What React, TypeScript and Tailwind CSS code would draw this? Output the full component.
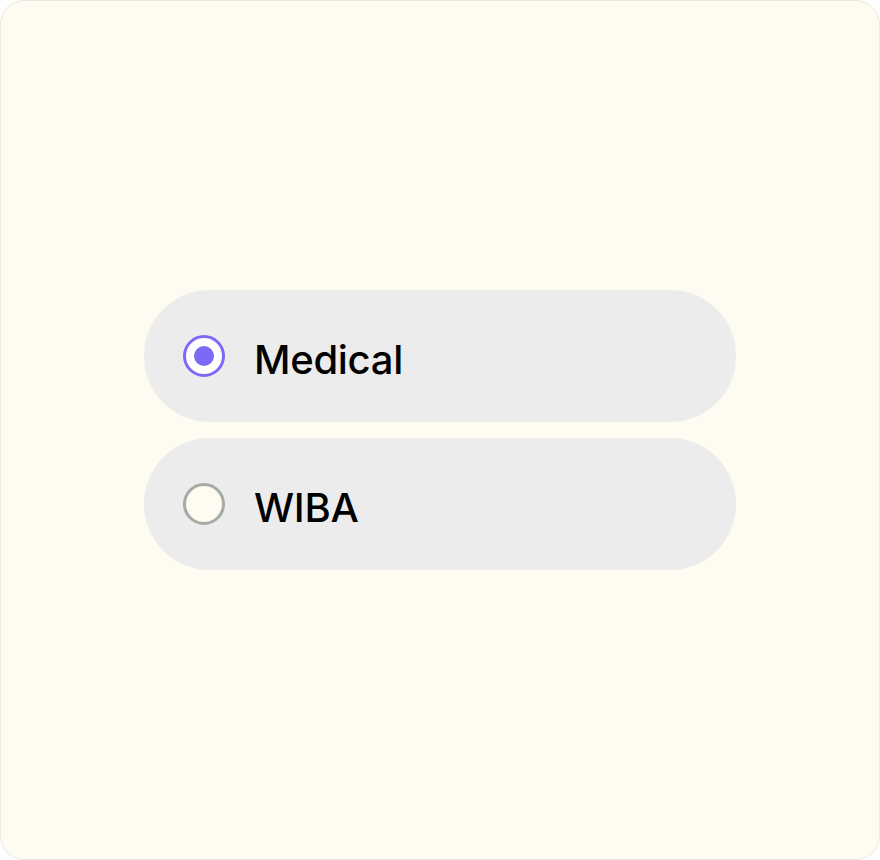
import { useState } from 'react';

const options = ["Medical", "WIBA"];

export default function App() {
  const [selected, setSelected] = useState("Medical");

  return (
    <div className="w-[880px] h-[860px] bg-white">
      <div className="w-full h-full rounded-[24px] border border-[#e8e8e4] bg-[#fefcf0] flex flex-col items-center justify-center gap-4">
        {options.map((option) => {
          const active = option === selected;
          return (
            <button
              key={option}
              onClick={() => setSelected(option)}
              className="w-[592px] h-[132px] rounded-full bg-[#ececec] flex items-center pl-[39px] gap-[29px] text-left"
            >
              <span
                className={
                  active
                    ? "w-[42px] h-[42px] rounded-full border-[3px] border-[#7b6af6] bg-white flex items-center justify-center"
                    : "w-[42px] h-[42px] rounded-full border-[3px] border-[#a4aaa5] bg-[#fefcf0] flex items-center justify-center"
                }
              >
                {active && <span className="w-[20px] h-[20px] rounded-full bg-[#7b6af6]" />}
              </span>
              <span className="pt-[8px] text-[40px] font-medium text-black font-['Inter',sans-serif] tracking-[-0.3px] leading-none">
                {option}
              </span>
            </button>
          );
        })}
      </div>
    </div>
  );
}
